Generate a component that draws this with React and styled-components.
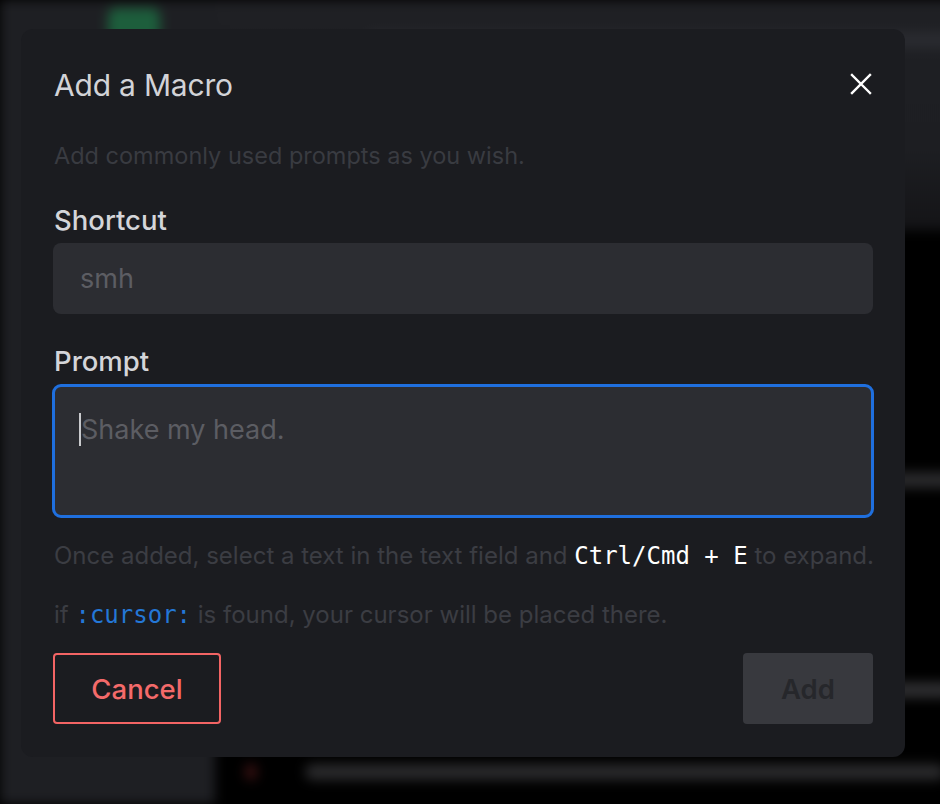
import styled, { createGlobalStyle } from 'styled-components';

const GlobalStyle = createGlobalStyle`
  html, body {
    margin: 0;
    padding: 0;
    background: #000;
  }
  body {
    font-family: Inter, "Noto Sans", sans-serif;
    overflow: hidden;
  }
`;

const Screen = styled.div`
  position: relative;
  width: 940px;
  height: 804px;
  overflow: hidden;
`;

const Backdrop = styled.div`
  display: flex;
  width: 100%;
  height: 100%;
  filter: blur(6px);
`;

const Sidebar = styled.div`
  width: 215px;
  flex-shrink: 0;
  background: #1e1f23;
  padding: 8px 0 0 108px;
  box-sizing: border-box;
`;

const Logo = styled.div`
  width: 52px;
  height: 40px;
  border-radius: 8px;
  background: #1d5e3c;
`;

const Main = styled.div`
  flex: 1;
  display: flex;
  flex-direction: column;
`;

const Header = styled.div`
  height: 230px;
  flex-shrink: 0;
  background: linear-gradient(#1f2024 0%, #1d1e22 65%, #141417 100%);
  padding: 0 0 0 150px;
  box-sizing: border-box;
  display: flex;
  flex-direction: column;
`;

const Body = styled.div`
  flex: 1;
  background: #000;
  display: flex;
  flex-direction: column;
`;

const BlurLine = styled.div`
  height: 16px;
  width: ${p => p.$w}px;
  margin: ${p => p.$y || 0}px 0 0 ${p => p.$x || 0}px;
  border-radius: 8px;
  background: ${p => p.$c || '#3a3b40'};
`;

const Modal = styled.div`
  position: absolute;
  left: 21px;
  top: 29px;
  width: 884px;
  height: 728px;
  box-sizing: border-box;
  background: #1b1c20;
  border-radius: 12px;
  padding: 32px 32px 0 32px;
  display: flex;
  flex-direction: column;
`;

const TitleRow = styled.div`
  display: flex;
  align-items: center;
  justify-content: space-between;
  height: 48px;
`;

const Title = styled.h2`
  margin: 0 0 0 1px;
  font-size: 30px;
  font-weight: 400;
  color: #d2d3d7;
  letter-spacing: -0.2px;
`;

const CloseButton = styled.button`
  background: none;
  border: none;
  padding: 0;
  margin: -3px 1px 0 0;
  width: 22px;
  height: 22px;
  display: flex;
  cursor: pointer;
`;

const Description = styled.p`
  margin: 32px 0 0 1px;
  font-size: 23.5px;
  line-height: 30px;
  color: #393b41;
`;

const Label = styled.label`
  display: block;
  margin: ${p => p.$top}px 0 6px 1px;
  font-size: 27.5px;
  line-height: 34px;
  font-weight: 500;
  color: #d4d5d9;
`;

const Input = styled.input`
  box-sizing: border-box;
  width: 100%;
  height: 71px;
  border: none;
  outline: none;
  border-radius: 8px;
  background: #2c2d32;
  padding: 0 27px;
  font-family: inherit;
  font-size: 27px;
  color: #d4d5d9;

  &::placeholder {
    color: #5c5d63;
  }
`;

const TextArea = styled.div`
  box-sizing: border-box;
  width: calc(100% + 2px);
  margin-left: -1px;
  height: 134px;
  border: 3px solid #1f6fde;
  border-radius: 9px;
  background: #2c2d32;
  padding: 26px 24px;
  font-size: 27px;
  line-height: 34px;
  color: #5c5d63;
  display: flex;
  align-items: flex-start;
`;

const Caret = styled.span`
  display: inline-block;
  flex-shrink: 0;
  width: 2px;
  height: 33px;
  background: #c9cacd;
`;

const Hint = styled.p`
  margin: ${p => p.$top}px 0 0 1px;
  font-size: 24px;
  line-height: 30px;
  color: #3b3d43;
  white-space: nowrap;
`;

const Code = styled.code`
  font-family: "DejaVu Sans Mono", "Liberation Mono", monospace;
  font-size: 24px;
  color: ${p => p.$blue ? '#2477d6' : '#ffffff'};
`;

const Actions = styled.div`
  display: flex;
  justify-content: space-between;
  margin-top: 23px;
`;

const Button = styled.button`
  box-sizing: border-box;
  height: 71px;
  border-radius: 4px;
  font-family: inherit;
  font-size: 27.5px;
  font-weight: 500;
  cursor: pointer;
`;

const CancelButton = styled(Button)`
  width: 168px;
  background: transparent;
  border: 2px solid #f36464;
  color: #f46a6a;
`;

const AddButton = styled(Button)`
  width: 130px;
  background: #38393e;
  border: none;
  color: #26272b;
  font-weight: 600;
  cursor: not-allowed;
`;

const App = () => (
  <Screen>
    <GlobalStyle />
    <Backdrop>
      <Sidebar>
        <Logo />
      </Sidebar>
      <Main>
        <Header>
          <BlurLine $w={600} $y={32} $c="#2a2b30" />
        </Header>
        <Body>
          <BlurLine $w={40} $y={142} $x={600} $c="#3a1112" />
          <BlurLine $w={200} $y={84} $x={600} $c="#2a2a2c" />
          <BlurLine $w={120} $y={194} $x={620} $c="#2e2e30" />
          <BlurLine $w={12} $y={66} $x={30} $c="#3a1112" />
          <BlurLine $w={640} $y={-16} $x={90} $c="#2a2a2c" />
        </Body>
      </Main>
    </Backdrop>

    <Modal>
      <TitleRow>
        <Title>Add a Macro</Title>
        <CloseButton aria-label="Close">
          <svg width="22" height="22" viewBox="0 0 22 22" fill="none" stroke="#ffffff" strokeWidth="2.4" strokeLinecap="square">
            <path d="M2 2L20 20M20 2L2 20" />
          </svg>
        </CloseButton>
      </TitleRow>
      <Description>Add commonly used prompts as you wish.</Description>

      <Label $top={32}>Shortcut</Label>
      <Input placeholder="smh" />

      <Label $top={30}>Prompt</Label>
      <TextArea>
        <Caret />
        Shake my head.
      </TextArea>

      <Hint $top={23}>
        Once added, select a text in the text field and <Code>Ctrl/Cmd + E</Code> to expand.
      </Hint>
      <Hint $top={29}>
        if <Code $blue>:cursor:</Code> is found, your cursor will be placed there.
      </Hint>

      <Actions>
        <CancelButton>Cancel</CancelButton>
        <AddButton>Add</AddButton>
      </Actions>
    </Modal>
  </Screen>
);

export default App;
